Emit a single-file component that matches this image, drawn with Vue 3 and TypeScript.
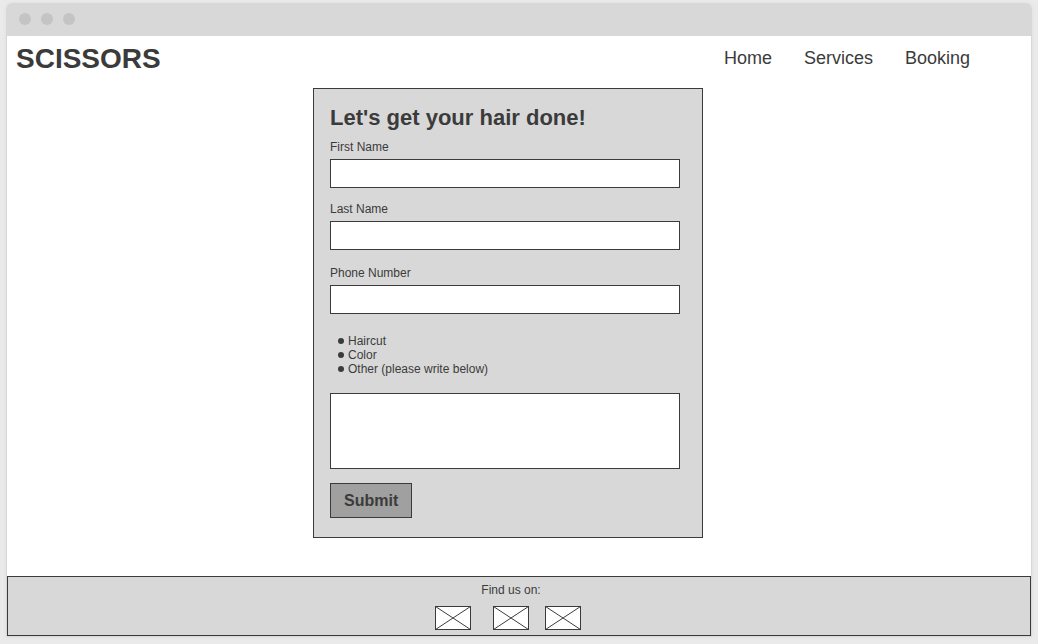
<script setup lang="ts">
import { ref } from 'vue'

interface Field {
  id: string
  label: string
  type: string
}

const links: string[] = ['Home', 'Services', 'Booking']
const fields: Field[] = [
  { id: 'first-name', label: 'First Name', type: 'text' },
  { id: 'last-name', label: 'Last Name', type: 'text' },
  { id: 'phone', label: 'Phone Number', type: 'tel' },
]
const services: string[] = ['Haircut', 'Color', 'Other (please write below)']
const socials: string[] = ['Social profile 1', 'Social profile 2', 'Social profile 3']

const values = ref<Record<string, string>>({ 'first-name': '', 'last-name': '', phone: '' })
const notes = ref('')
</script>

<template>
  <div class="page">
    <div class="window">
      <div class="titlebar">
        <span v-for="n in 3" :key="n" class="dot"></span>
      </div>

      <header class="header">
        <h1 class="brand">SCISSORS</h1>
        <nav class="nav">
          <a v-for="link in links" :key="link" class="nav-link" href="#">{{ link }}</a>
        </nav>
      </header>

      <main class="main">
        <form class="card" @submit.prevent>
          <h2 class="title">Let's get your hair done!</h2>
          <div v-for="field in fields" :key="field.id" class="field">
            <label class="label" :for="field.id">{{ field.label }}</label>
            <input :id="field.id" v-model="values[field.id]" class="input" :type="field.type" />
          </div>
          <ul class="services">
            <li v-for="service in services" :key="service" class="service">{{ service }}</li>
          </ul>
          <textarea v-model="notes" class="input notes" aria-label="Other"></textarea>
          <button class="submit" type="submit">Submit</button>
        </form>
      </main>

      <footer class="footer">
        <p class="find">Find us on:</p>
        <div class="socials">
          <a v-for="social in socials" :key="social" class="social" href="#" :aria-label="social">
            <svg width="36" height="24" viewBox="0 0 36 24" aria-hidden="true">
              <rect x="0.5" y="0.5" width="35" height="23" fill="#fff" stroke="#3b3b3b" />
              <path d="M0.5 0.5L35.5 23.5M35.5 0.5L0.5 23.5" fill="none" stroke="#3b3b3b" />
            </svg>
          </a>
        </div>
      </footer>
    </div>
  </div>
</template>

<style>
body {
  margin: 0;
  background: #eaeaea;
}
</style>

<style scoped>
.page,
.page * {
  box-sizing: border-box;
}

.page {
  display: flex;
  min-height: 100vh;
  padding: 3px 6px 7px;
  background: #eaeaea;
  color: #3b3b3b;
  font-family: "Liberation Sans", Arial, sans-serif;
  font-size: 12px;
  line-height: 14px;
}

.window {
  flex: 1;
  display: flex;
  flex-direction: column;
  border: 1px solid #d8d8d8;
  border-top: 0;
  border-radius: 6px 6px 0 0;
  background: #fff;
  box-shadow: 0 0 4px rgba(0, 0, 0, 0.05);
}

.titlebar {
  display: flex;
  align-items: center;
  gap: 10px;
  height: 33px;
  padding: 0 12px 2px;
  border-radius: 5px 5px 0 0;
  background: #d8d8d8;
}

.dot {
  width: 12px;
  height: 12px;
  border-radius: 50%;
  background: #c4c4c4;
}

.header {
  display: flex;
  align-items: flex-start;
  justify-content: space-between;
  padding: 7px 61px 5px 9px;
}

.brand {
  margin: 0;
  font-size: 28px;
  line-height: 32px;
}

.nav {
  display: flex;
  gap: 32px;
  padding-top: 5px;
  font-size: 18px;
  line-height: 20px;
}

.nav-link {
  color: inherit;
  text-decoration: none;
}

.main {
  flex: 1;
  display: flex;
  justify-content: center;
  align-items: flex-start;
  padding: 8px 22px 38px 0;
}

.card {
  width: 390px;
  max-width: 100%;
  padding: 16px 22px 19px 16px;
  border: 1px solid #3b3b3b;
  background: #d8d8d8;
}

.title {
  margin: 0 0 9px;
  font-size: 22px;
  line-height: 26px;
}

.field {
  display: flex;
  flex-direction: column;
  gap: 5px;
  margin-bottom: 14px;
}

.field:nth-of-type(2) {
  margin-bottom: 16px;
}

.field:nth-of-type(3) {
  margin-bottom: 20px;
}

.input {
  display: block;
  width: 100%;
  height: 29px;
  margin: 0;
  padding: 4px 8px;
  border: 1px solid #3b3b3b;
  border-radius: 0;
  background: #fff;
  color: inherit;
  font: inherit;
}

.services {
  margin: 0 0 17px;
  padding: 0 0 0 8px;
  list-style: none;
}

.service {
  display: flex;
  align-items: center;
  gap: 4px;
}

.service::before {
  content: "";
  width: 6px;
  height: 6px;
  border-radius: 50%;
  background: #3b3b3b;
}

.notes {
  height: 76px;
  resize: none;
}

.submit {
  display: block;
  height: 35px;
  margin: 14px 0 0;
  padding: 0 13px;
  border: 1px solid #3b3b3b;
  border-radius: 0;
  background: #a0a0a0;
  color: inherit;
  font: bold 16px/20px "Liberation Sans", Arial, sans-serif;
}

.footer {
  display: flex;
  flex-direction: column;
  align-items: center;
  gap: 9px;
  padding: 6px 22px 5px 0;
  border: 1px solid #3b3b3b;
  background: #d8d8d8;
}

.find {
  margin: 0;
  padding-left: 6px;
}

.socials {
  display: flex;
  gap: 16px;
}

.social {
  display: block;
  height: 24px;
}

.social:first-child {
  margin-right: 6px;
}

.social svg {
  display: block;
}
</style>
